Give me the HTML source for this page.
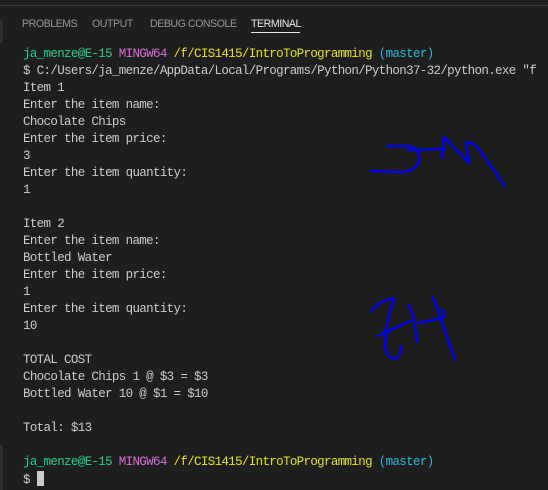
<!DOCTYPE html>
<html><head><meta charset="utf-8"><style>
html,body{margin:0;padding:0;background:#1e1e1e;width:548px;height:490px;overflow:hidden;position:relative}
.top{position:absolute;left:0;top:0;width:548px;height:5px;background:#1e1e1e;border-bottom:1px solid #3a3a3a}
.strip{position:absolute;left:0;width:3px;background:#2d2d30}
.tab{position:absolute;top:18px;font:10.6px "Liberation Sans",sans-serif;color:#969696;letter-spacing:-0.45px}
.term{position:absolute;left:23px;top:46px;font:12.5px/17px "Liberation Mono",monospace;letter-spacing:-0.66px;color:#cccccc;white-space:pre}
.g{color:#23d18b}.m{color:#d670d6}.y{color:#e5e510}.c{color:#29b8db}
.cur{display:inline-block;width:7px;height:15px;background:#cccccc;vertical-align:-3px}
</style></head><body>
<div class="top"></div>
<div class="strip" style="top:20px;height:23px"></div>
<div class="strip" style="top:445px;height:45px"></div>
<div class="tab" style="left:22px">PROBLEMS</div>
<div class="tab" style="left:92px">OUTPUT</div>
<div class="tab" style="left:150px">DEBUG CONSOLE</div>
<div class="tab" style="left:251px;color:#e7e7e7">TERMINAL</div>
<div style="position:absolute;left:251px;top:32px;width:49px;height:1px;background:#e7e7e7"></div>
<div class="term"><span class="g">ja_menze@E-15</span> <span class="m">MINGW64</span> <span class="y">/f/CIS1415/IntroToProgramming</span> <span class="c">(master)</span>
$ C:/Users/ja_menze/AppData/Local/Programs/Python/Python37-32/python.exe "f
Item 1
Enter the item name:
Chocolate Chips
Enter the item price:
3
Enter the item quantity:
1

Item 2
Enter the item name:
Bottled Water
Enter the item price:
1
Enter the item quantity:
10

TOTAL COST
Chocolate Chips 1 @ $3 = $3
Bottled Water 10 @ $1 = $10

Total: $13

<span class="g">ja_menze@E-15</span> <span class="m">MINGW64</span> <span class="y">/f/CIS1415/IntroToProgramming</span> <span class="c">(master)</span>
$ <span class="cur"></span></div>
<svg width="548" height="490" style="position:absolute;left:0;top:0" fill="none" stroke="#0000ff" stroke-width="2.3" stroke-linecap="round" stroke-linejoin="round">
<path d="M387,146 L408,146 Q420,148 419,160 Q416,172 400,172 L371,171"/>
<path d="M408,150 L445,149"/>
<path d="M442,158 L444,137 L469,163 L466,143 Q470,140 478,148 L505,186"/>
<path d="M371,311 Q383,298 394,299 Q386,320 385,345 Q387,361 397,358 Q402,352 401,346"/>
<path d="M378,336 L410,321"/>
<path d="M408,305 Q414,312 417,342"/>
<path d="M418,323 L443,318 Q446,312 442,310"/>
<path d="M433,297 L455,360"/>
</svg>
</body></html>
